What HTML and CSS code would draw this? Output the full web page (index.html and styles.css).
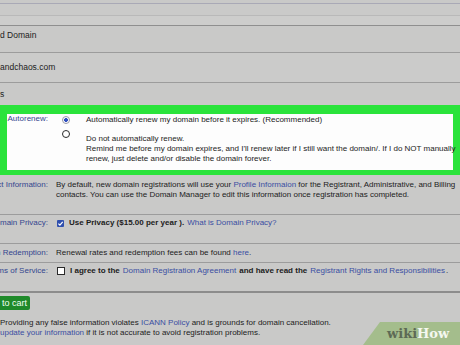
FILE: index.html
```html
<!DOCTYPE html>
<html>
<head>
<meta charset="utf-8">
<link rel="stylesheet" href="styles.css">
</head>
<body>
<div class="page">
  <div class="topbar">
    <div class="tb tb1"></div>
    <div class="tb tb2"></div>
    <div class="tb tb3"></div>
  </div>
  <div class="row r-domain"><span class="plain">d Domain</span></div>
  <div class="row r-name"><span class="plain">andchaos.com</span></div>
  <div class="row r-years"><span class="plain">s</span></div>

  <div class="highlight">
    <div class="inner">
      <div class="lbl lbl-in">Autorenew:</div>
      <div class="options">
        <div class="opt opt1">
          <span class="radio on"></span>
          <div class="opt-text">Automatically renew my domain before it expires. (Recommended)</div>
        </div>
        <div class="opt opt2">
          <span class="radio"></span>
          <div class="opt-text opt-text2">Do not automatically renew.<br>Remind me before my domain expires, and I'll renew later if I still want the domain/. If I do NOT manually<br>renew, just delete and/or disable the domain forever.</div>
        </div>
      </div>
    </div>
  </div>

  <div class="row r-contact">
    <div class="lbl">Contact Information:</div>
    <div class="val">By default, new domain registrations will use your <a class="lnk">Profile Informaion</a> for the Registrant, Administrative, and Billing<br>contacts. You can use the Domain Manager to edit this information once registration has completed.</div>
  </div>
  <div class="row r-privacy">
    <div class="lbl">Domain Privacy:</div>
    <div class="val check-val"><span class="cbox on"><svg viewBox="0 0 7 7" width="7" height="7"><path d="M1.4 3.6 L2.9 5.1 L5.7 1.8" fill="none" stroke="#fff" stroke-width="1.2"/></svg></span><b>Use Privacy ($15.00 per year ).</b> <a class="lnk">What is Domain Privacy?</a></div>
  </div>
  <div class="row r-redemption">
    <div class="lbl">Domain Redemption:</div>
    <div class="val">Renewal rates and redemption fees can be found <a class="lnk">here</a>.</div>
  </div>
  <div class="row r-tos">
    <div class="lbl">Terms of Service:</div>
    <div class="val check-val"><span class="cbox"></span><b>I agree to the</b> <a class="lnk">Domain Registration Agreement</a> <b>and have read the</b> <a class="lnk">Registrant Rights and Responsibilities</a>.</div>
  </div>

  <div class="btn-row">
    <div class="btn-cell"><span class="btn">Add to cart</span></div>
  </div>

  <div class="foot">
    <p>Providing any false information violates <a class="lnk">ICANN Policy</a> and is grounds for domain cancellation.</p>
    <p><a class="lnk">update your information</a> if it is not accurate to avoid registration problems.</p>
  </div>

  <div class="wm"><span class="wm-wiki">wiki</span><span class="wm-how">How</span></div>
</div>
</body>
</html>
```

FILE: styles.css
```css
html, body {
  margin: 0;
  padding: 0;
}
body {
  background: #c9c9c8;
  font-family: "Liberation Sans", Arial, sans-serif;
  font-size: 8px;
  line-height: 10px;
  color: #1c1c1c;
  overflow: hidden;
  width: 460px;
  height: 345px;
}
.page {
  position: relative;
  width: 460px;
  height: 345px;
  overflow: hidden;
}
.tb1 {
  height: 3px;
  border-bottom: 1px solid #a9a9b6;
}
.tb2 {
  height: 11px;
  border-bottom: 1px solid #b9b9b9;
  background: #cacac9;
}
.tb3 {
  height: 9px;
  border-bottom: 1px solid #8f8f8f;
  background: #cdcdcc;
}
.row {
  display: flex;
  border-bottom: 1px solid #9c9c9c;
}
.plain {
  font-size: 8.5px;
}
.r-domain {
  height: 22px;
  padding-top: 4px;
}
.r-name {
  height: 20px;
  padding-top: 9px;
  background: #cbcbca;
}
.r-years {
  height: 16px;
  padding-top: 6px;
  border-bottom: none;
}
.highlight {
  background: #2ae33b;
  padding: 9px 7px 5px 7px;
}
.inner {
  background: #fdfdfd;
  display: flex;
  height: 56px;
}
.lbl {
  width: 48px;
  flex: none;
  display: flex;
  justify-content: flex-end;
  white-space: nowrap;
  color: #34468f;
}
.lbl-in {
  width: 41px;
}
.options {
  margin-left: 8px;
  flex: 1;
}
.opt {
  display: flex;
  align-items: flex-start;
}
.opt1 {
  padding-top: 1px;
}
.opt2 {
  margin-top: 5px;
}
.radio {
  width: 6px;
  height: 6px;
  border-radius: 50%;
  border: 1px solid #2b2b2b;
  background: #fff;
  margin-left: 6px;
  flex: none;
  box-sizing: content-box;
}
.opt1 .radio {
  margin-top: 1px;
  border-color: #9a9aa8;
  background: radial-gradient(circle, #3150c0 0 1.6px, #fff 2.2px);
}
.opt-text {
  margin-left: 16px;
  white-space: nowrap;
}
.opt-text2 {
  padding-top: 4px;
}
.r-contact {
  padding-top: 5px;
  height: 34px;
}
.val {
  margin-left: 8px;
  white-space: nowrap;
}
.lnk {
  color: #3a4ea2;
}
.r-privacy {
  padding-top: 3px;
  height: 25px;
}
.check-val {
  display: flex;
  align-items: center;
  height: 10px;
  gap: 0;
}
.check-val b {
  font-weight: bold;
  margin: 0 2px;
}
.check-val .lnk {
  margin: 0 1px;
}
.cbox {
  width: 6px;
  height: 6px;
  border: 1px solid #2a2a2a;
  background: #fff;
  margin-left: 1px;
  margin-right: 3px;
  flex: none;
  display: flex;
}
.cbox.on {
  width: 7px;
  height: 7px;
  border: none;
  background: #2f4fae;
  border-radius: 1px;
}
.r-redemption {
  padding-top: 4px;
  height: 14px;
}
.r-tos {
  padding-top: 3px;
  height: 25px;
  border-bottom: 2px solid #8c8c8c;
}
.btn-row {
  display: flex;
  padding-top: 3px;
}
.btn-cell {
  width: 30px;
  display: flex;
  justify-content: flex-end;
  white-space: nowrap;
}
.btn {
  background: #1f8a2a;
  color: #f2fff2;
  font-size: 9px;
  line-height: 14px;
  height: 14px;
  padding: 0 3px 0 4px;
  border-radius: 2px;
}
.foot {
  margin-top: 8px;
}
.foot p {
  margin: 0;
  white-space: nowrap;
}
.wm {
  position: absolute;
  right: 0;
  bottom: 0;
  width: 97px;
  height: 23px;
  background: #a4bd8c;
  clip-path: polygon(17px 0, 100% 0, 100% 100%, 0 100%);
  font-family: "DejaVu Serif", "Liberation Serif", serif;
  font-weight: bold;
  font-size: 13px;
  line-height: 24px;
  padding-left: 24px;
  box-sizing: border-box;
  white-space: nowrap;
}
.wm-wiki {
  color: #5d6a55;
}
.wm-how {
  color: #f4f8f0;
}
```
